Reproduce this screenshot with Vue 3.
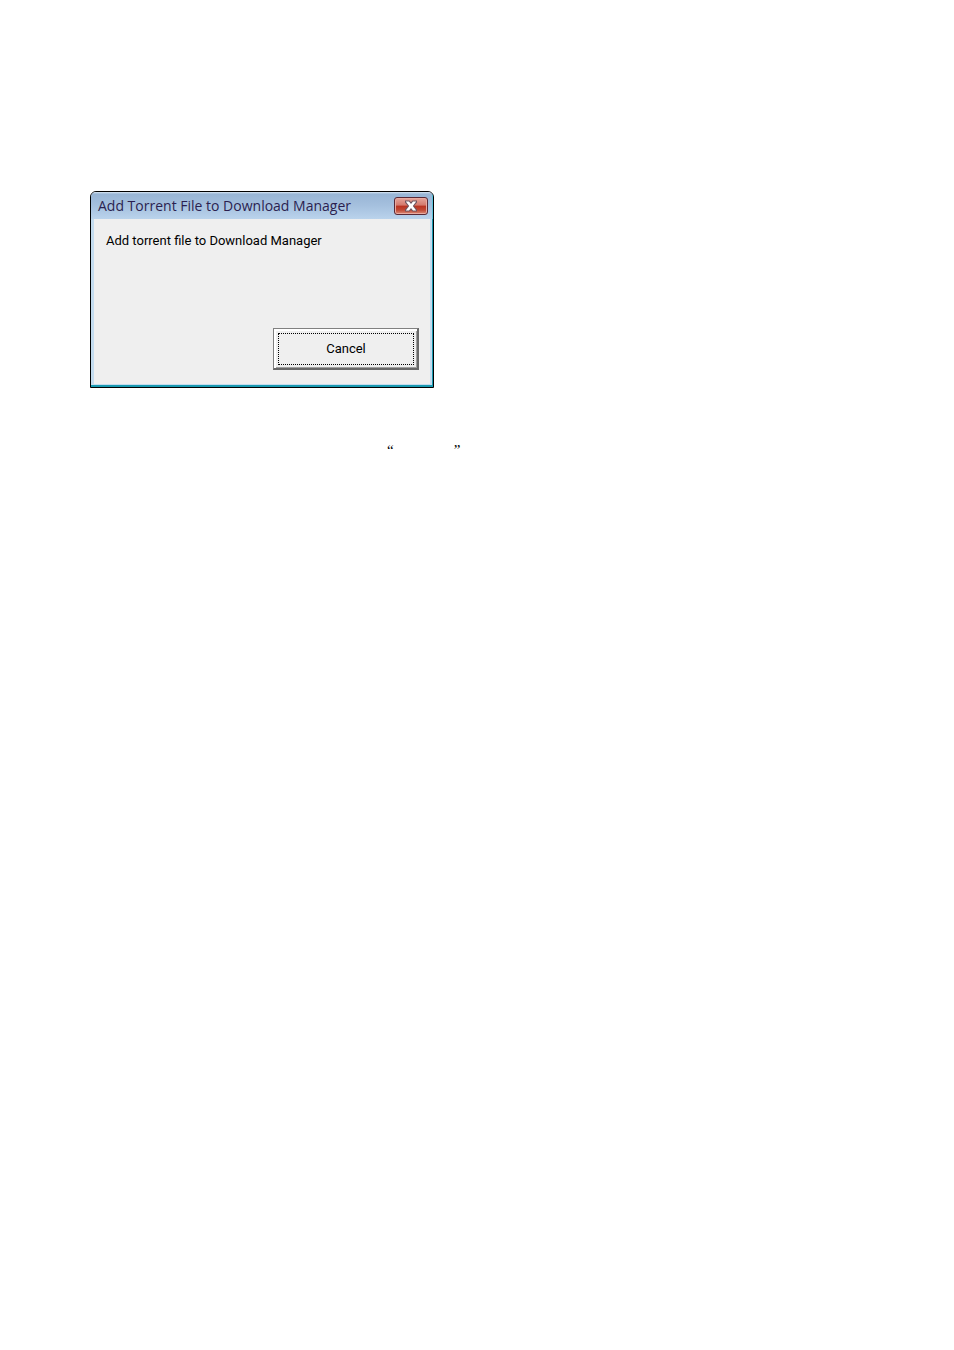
<script setup>
import { ref } from 'vue'

const title = ref('Add Torrent File to Download Manager')
const message = ref('Add torrent file to Download Manager')
</script>

<template>
  <main class="page">
    <section class="dialog" role="dialog" aria-labelledby="dialog-title">
      <header class="titlebar">
        <h1 id="dialog-title" class="title">{{ title }}</h1>
        <button class="close" type="button" aria-label="Close">
          <svg width="14" height="12" viewBox="0 0 14 12" aria-hidden="true">
            <path
              d="M1 0.500h4.500L7 2.300 8.500 0.500H13V2.500L10 6l3 3.500v2H8.500L7 9.700 5.500 11.500H1v-2L4 6 1 2.500z"
              fill="#6f5660"
            />
            <path
              d="M1.800 1.500H5l2 2.500L9 1.500h3.200L8.800 6l3.400 4.500H9L7 8l-2 2.500H1.800L5.200 6z"
              fill="#fff"
            />
          </svg>
        </button>
      </header>
      <div class="content">
        <p class="message">{{ message }}</p>
        <button class="cancel" type="button"><span class="focus">Cancel</span></button>
      </div>
    </section>
    <p class="quote"><span>“</span><span>”</span></p>
  </main>
</template>

<style>
body {
  background: #fff;
}
</style>

<style scoped>
.page {
  padding: 191px 90px 0;
}
.dialog {
  box-sizing: border-box;
  max-width: 344px;
  border: 1px solid #000;
  border-radius: 6px 6px 0 0;
  background: #efefef;
  box-shadow: inset -1px -2px #1899b0, inset 3px -3px #c4dcef, inset -3px 0 #c4dcef;
  overflow: hidden;
}
.titlebar {
  display: flex;
  align-items: center;
  justify-content: space-between;
  height: 27px;
  padding: 0 4px 0 7px;
  border-right: 1px solid #5cc4dc;
  box-sizing: border-box;
  background: linear-gradient(#dbe8f4 0, #98b5d5 2px, #a5c0de 50%, #bad3ec 100%);
}
.title {
  margin: 0;
  color: #2b1f50;
  font: 400 14px/18px "Open Sans", "Noto Sans", sans-serif;
  white-space: nowrap;
}
.close {
  display: flex;
  align-items: center;
  justify-content: center;
  width: 34px;
  height: 18px;
  padding: 0;
  border: 1px solid #592936;
  border-radius: 3px;
  background: linear-gradient(#e5a49a 0, #d4796c 45%, #b93220 50%, #c04834 75%, #dc8c78 100%);
  box-shadow: inset 0 0 0 1px #e8aaa0;
}
.content {
  display: flex;
  flex-direction: column;
  justify-content: space-between;
  height: 168px;
  box-sizing: border-box;
  padding: 13px 14px 17px 15px;
}
.message {
  margin: 0;
  color: #000;
  font: 13px/18px Roboto, "Liberation Sans", sans-serif;
}
.cancel {
  align-self: flex-end;
  width: 146px;
  height: 42px;
  padding: 4px 3px 3px 4px;
  border: 1px solid #808080;
  border-width: 1px 2px 2px 1px;
  border-color: #808080 #696969 #696969 #808080;
  background: #efefef;
  box-shadow: inset 2px 2px #fff, inset -1px -1px #a0a0a0;
  color: #000;
  font: 13px/18px Roboto, "Liberation Sans", sans-serif;
}
.focus {
  display: flex;
  align-items: center;
  justify-content: center;
  box-sizing: border-box;
  height: 100%;
  border: 1px dotted #000;
}
.quote {
  display: flex;
  gap: 60px;
  margin: 52px 0 0 297px;
  color: #000;
  font: 15px/20px "Liberation Serif", serif;
}
</style>
